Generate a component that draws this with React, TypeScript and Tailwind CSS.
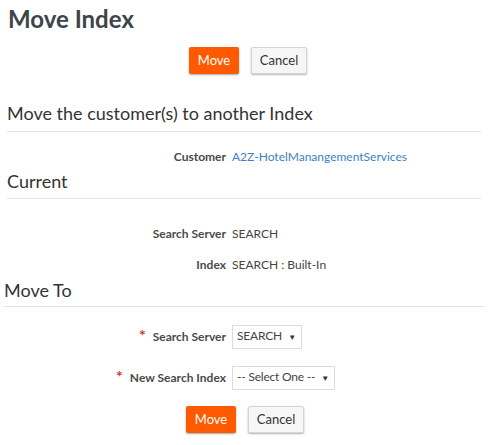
import React from 'react';

function MoveButton() {
    return (
        <button className="h-[27px] w-[50px] rounded-[2px] bg-[#ff5a00] text-[13px] text-white shadow-[0_1px_2px_rgba(0,0,0,0.35)]">
            Move
        </button>
    );
}

function CancelButton() {
    return (
        <button className="h-[27px] w-[56px] rounded-[2px] border border-[#d4d4d4] bg-[#f6f6f6] text-[13px] text-[#333] shadow-[0_1px_2px_rgba(0,0,0,0.3)]">
            Cancel
        </button>
    );
}

function Row({ label, children, required }: { label: string; children: React.ReactNode; required?: boolean }) {
    return (
        <div className="flex items-center">
            <div className="flex w-[226px] items-center justify-end text-[12px] font-bold text-[#4a4a4a]">
                {required && <span className="mr-[7px] -mt-[4px] text-[16px] leading-none text-[#e0322b]">*</span>}
                {label}
            </div>
            <div className="pl-[6px] text-[12px] text-[#444]">{children}</div>
        </div>
    );
}

function FakeSelect({ value, width }: { value: string; width: string }) {
    return (
        <div className={`flex h-[24px] items-center justify-between whitespace-nowrap border border-[#dcdcdc] bg-white pl-[4px] pr-[5px] text-[12px] tracking-[-0.2px] text-[#444] ${width}`}>
            <span className="-mt-[2px]">{value}</span>
            <span className="text-[8px] text-[#333]">▼</span>
        </div>
    );
}

export default function App() {
    return (
        <div className="h-[445px] w-[488px] overflow-hidden bg-white font-['Lato',sans-serif]">
            {/* Title */}
            <h1 className="pl-[8px] pt-[4px] text-[24px] font-bold leading-[30px] text-[#3d4549]">Move Index</h1>

            <div className="mt-[13px] flex justify-center gap-[12px] pl-[8px]">
                <MoveButton />
                <CancelButton />
            </div>

            {/* Customer section */}
            <div className="mx-[7px] mt-[27px] border-b border-[#e4e4e4] pb-[6px] text-[18px] leading-[24px] text-[#333]">
                Move the customer(s) to another Index
            </div>
            <div className="mt-[16px]">
                <Row label="Customer">
                    <span className="text-[#3f7fc6]">A2Z-HotelManangementServices</span>
                </Row>
            </div>

            {/* Current */}
            <div className="mx-[7px] mt-[3px] border-b border-[#e4e4e4] pb-[5px] text-[18px] leading-[24px] text-[#333]">
                Current
            </div>
            <div className="mt-[26px] flex flex-col gap-[13px]">
                <Row label="Search Server">SEARCH</Row>
                <Row label="Index">SEARCH : Built-In</Row>
            </div>

            {/* Move To */}
            <div className="mx-[3px] mt-[4px] border-b border-[#e4e4e4] pb-[4px] pl-[1px] text-[18px] leading-[24px] text-[#333]">
                Move To
            </div>
            <div className="mt-[18px] flex flex-col gap-[17px]">
                <Row label="Search Server" required>
                    <FakeSelect value="SEARCH" width="w-[70px]" />
                </Row>
                <Row label="New Search Index" required>
                    <FakeSelect value="-- Select One --" width="w-[103px]" />
                </Row>
            </div>

            <div className="mt-[16px] flex justify-center gap-[12px] pl-[2px]">
                <MoveButton />
                <CancelButton />
            </div>
        </div>
    );
}
